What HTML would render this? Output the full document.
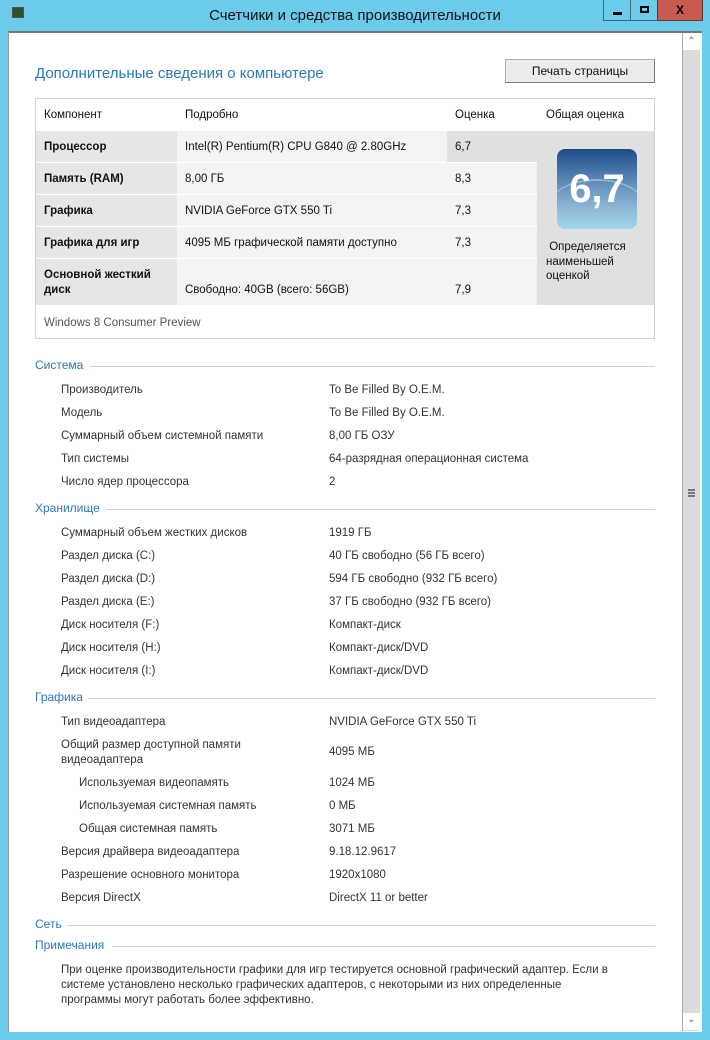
<!DOCTYPE html>
<html><head><meta charset="utf-8"><style>
*{margin:0;padding:0;box-sizing:border-box}
body{width:710px;height:1040px;background:#6ccbea;position:relative;overflow:hidden;font-family:"Liberation Sans","DejaVu Sans",sans-serif;font-size:11.5px;color:#333}
.a{position:absolute;white-space:nowrap;line-height:14px}
.h{position:absolute;left:35px;color:#2a78bf;font-size:12px;line-height:14px;white-space:nowrap}
.ln{position:absolute;height:1px;background:#d0d0d0;right:55px}
.b{font-weight:bold;color:#111}
.k{color:#111}
</style></head><body>
<!-- title bar -->
<div class="a" style="left:12px;top:7px;width:12px;height:11px;background:#2f4f2f;border:1px solid #555"></div>
<div class="a" style="left:0;width:710px;top:7px;text-align:center;font-size:15px;line-height:18px;color:#111">Счетчики и средства производительности</div>
<div class="a" style="left:603px;top:0;width:28px;height:21px;border:1px solid #3a6f80;border-top:none"><div style="position:absolute;left:9px;top:12px;width:9px;height:3px;background:#000"></div></div>
<div class="a" style="left:630px;top:0;width:28px;height:21px;border:1px solid #3a6f80;border-top:none"><div style="position:absolute;left:9px;top:6px;width:9px;height:7px;border:2px solid #000"></div></div>
<div class="a" style="left:657px;top:0;width:46px;height:21px;background:#c75b50;border:1px solid #5a3a3a;border-top:none;text-align:center;font-weight:bold;font-size:12px;line-height:20px;color:#000">X</div>
<!-- client -->
<div class="a" style="left:8px;top:31px;width:694px;height:1001px;background:#fff;border-top:2px solid #777;border-left:1px solid #999"></div>
<!-- scrollbar -->
<div class="a" style="left:682px;top:33px;width:18px;height:998px;background:#dcdcdc;border-left:1px solid #aaa"></div>
<div class="a" style="left:683px;top:33px;width:17px;height:17px;background:#fff;text-align:center;font-size:10px;color:#666;line-height:17px">&#8963;</div>
<div class="a" style="left:683px;top:1013px;width:17px;height:17px;background:#fff;text-align:center;font-size:10px;color:#666;line-height:14px">&#8964;</div>
<div class="a" style="left:688px;top:489px;width:7px;height:2px;background:#777;box-shadow:0 3px 0 #777,0 6px 0 #777"></div>

<div class="a" style="left:35px;top:65px;font-size:15px;line-height:18px;color:#2a78bf">Дополнительные сведения о компьютере</div>
<div class="a" style="left:505px;top:59px;width:150px;height:24px;background:#ececec;border:1px solid #adadad;border-right-color:#777;border-bottom-color:#777;text-align:center;line-height:22px;color:#111;font-size:12px">Печать страницы</div>

<!-- table -->
<div class="a" style="left:35px;top:98px;width:620px;height:241px;border:1px solid #d0d0d0;background:#fff"></div>
<div class="a k" style="left:44px;top:108px">Компонент</div>
<div class="a k" style="left:185px;top:108px">Подробно</div>
<div class="a k" style="left:455px;top:108px">Оценка</div>
<div class="a k" style="left:546px;top:108px">Общая оценка</div>
<div class="a" style="left:537px;top:131px;width:117px;height:174px;background:#e0e0e0"></div>
<!-- rows -->
<div class="a" style="left:36px;top:131px;width:141px;height:31px;background:#e6e6e6"></div>
<div class="a" style="left:177px;top:131px;width:270px;height:31px;background:#f3f3f3"></div>
<div class="a" style="left:447px;top:131px;width:90px;height:31px;background:#e0e0e0"></div>
<div class="a" style="left:36px;top:163px;width:141px;height:31px;background:#e6e6e6"></div>
<div class="a" style="left:177px;top:163px;width:360px;height:31px;background:#f3f3f3"></div>
<div class="a" style="left:36px;top:195px;width:141px;height:31px;background:#e6e6e6"></div>
<div class="a" style="left:177px;top:195px;width:360px;height:31px;background:#f3f3f3"></div>
<div class="a" style="left:36px;top:227px;width:141px;height:31px;background:#e6e6e6"></div>
<div class="a" style="left:177px;top:227px;width:360px;height:31px;background:#f3f3f3"></div>
<div class="a" style="left:36px;top:259px;width:141px;height:46px;background:#e6e6e6"></div>
<div class="a" style="left:177px;top:259px;width:360px;height:46px;background:#f3f3f3"></div>
<div class="a b" style="left:44px;top:140px">Процессор</div>
<div class="a k" style="left:185px;top:140px">Intel(R) Pentium(R) CPU G840 @ 2.80GHz</div>
<div class="a k" style="left:455px;top:140px">6,7</div>
<div class="a b" style="left:44px;top:172px">Память (RAM)</div>
<div class="a k" style="left:185px;top:172px">8,00 ГБ</div>
<div class="a k" style="left:455px;top:172px">8,3</div>
<div class="a b" style="left:44px;top:204px">Графика</div>
<div class="a k" style="left:185px;top:204px">NVIDIA GeForce GTX 550 Ti</div>
<div class="a k" style="left:455px;top:204px">7,3</div>
<div class="a b" style="left:44px;top:236px">Графика для игр</div>
<div class="a k" style="left:185px;top:236px">4095 МБ графической памяти доступно</div>
<div class="a k" style="left:455px;top:236px">7,3</div>
<div class="a b" style="left:44px;top:268px;line-height:15px">Основной жесткий<br>диск</div>
<div class="a k" style="left:185px;top:283px">Свободно: 40GB (всего: 56GB)</div>
<div class="a k" style="left:455px;top:283px">7,9</div>
<!-- badge -->
<div class="a" style="left:557px;top:149px;width:80px;height:80px;border-radius:8px;background:linear-gradient(180deg,#1d4c86 0%,#5d89b8 40%,#8fb9d8 75%,#9fd6ea 100%);overflow:hidden">
<div style="position:absolute;left:-10px;top:30px;width:100px;height:60px;border-radius:50%;border-top:2px solid rgba(255,255,255,.35)"></div>
<div style="position:absolute;left:0;top:0;width:80px;text-align:center;font-weight:bold;font-size:40px;line-height:80px;color:#fff">6,7</div></div>
<div class="a k" style="left:546px;top:240px;line-height:14.5px">&nbsp;Определяется<br>наименьшей<br>оценкой</div>
<div class="a" style="left:44px;top:316px;color:#555">Windows 8 Consumer Preview</div>

<!-- sections -->
<div class="h" style="top:358px">Система</div><div class="ln" style="left:90px;top:366px"></div>
<div class="a" style="left:61px;top:383px">Производитель</div><div class="a" style="left:329px;top:383px">To Be Filled By O.E.M.</div>
<div class="a" style="left:61px;top:406px">Модель</div><div class="a" style="left:329px;top:406px">To Be Filled By O.E.M.</div>
<div class="a" style="left:61px;top:429px">Суммарный объем системной памяти</div><div class="a" style="left:329px;top:429px">8,00 ГБ ОЗУ</div>
<div class="a" style="left:61px;top:452px">Тип системы</div><div class="a" style="left:329px;top:452px">64-разрядная операционная система</div>
<div class="a" style="left:61px;top:475px">Число ядер процессора</div><div class="a" style="left:329px;top:475px">2</div>

<div class="h" style="top:501px">Хранилище</div><div class="ln" style="left:106px;top:509px"></div>
<div class="a" style="left:61px;top:526px">Суммарный объем жестких дисков</div><div class="a" style="left:329px;top:526px">1919 ГБ</div>
<div class="a" style="left:61px;top:549px">Раздел диска (C:)</div><div class="a" style="left:329px;top:549px">40 ГБ свободно (56 ГБ всего)</div>
<div class="a" style="left:61px;top:572px">Раздел диска (D:)</div><div class="a" style="left:329px;top:572px">594 ГБ свободно (932 ГБ всего)</div>
<div class="a" style="left:61px;top:595px">Раздел диска (E:)</div><div class="a" style="left:329px;top:595px">37 ГБ свободно (932 ГБ всего)</div>
<div class="a" style="left:61px;top:618px">Диск носителя (F:)</div><div class="a" style="left:329px;top:618px">Компакт-диск</div>
<div class="a" style="left:61px;top:641px">Диск носителя (H:)</div><div class="a" style="left:329px;top:641px">Компакт-диск/DVD</div>
<div class="a" style="left:61px;top:664px">Диск носителя (I:)</div><div class="a" style="left:329px;top:664px">Компакт-диск/DVD</div>

<div class="h" style="top:690px">Графика</div><div class="ln" style="left:88px;top:698px"></div>
<div class="a" style="left:61px;top:715px">Тип видеоадаптера</div><div class="a" style="left:329px;top:715px">NVIDIA GeForce GTX 550 Ti</div>
<div class="a" style="left:61px;top:738px;line-height:15px">Общий размер доступной памяти<br>видеоадаптера</div><div class="a" style="left:329px;top:745px">4095 МБ</div>
<div class="a" style="left:79px;top:776px">Используемая видеопамять</div><div class="a" style="left:329px;top:776px">1024 МБ</div>
<div class="a" style="left:79px;top:799px">Используемая системная память</div><div class="a" style="left:329px;top:799px">0 МБ</div>
<div class="a" style="left:79px;top:822px">Общая системная память</div><div class="a" style="left:329px;top:822px">3071 МБ</div>
<div class="a" style="left:61px;top:845px">Версия драйвера видеоадаптера</div><div class="a" style="left:329px;top:845px">9.18.12.9617</div>
<div class="a" style="left:61px;top:868px">Разрешение основного монитора</div><div class="a" style="left:329px;top:868px">1920x1080</div>
<div class="a" style="left:61px;top:891px">Версия DirectX</div><div class="a" style="left:329px;top:891px">DirectX 11 or better</div>

<div class="h" style="top:917px">Сеть</div><div class="ln" style="left:67px;top:925px"></div>
<div class="h" style="top:938px">Примечания</div><div class="ln" style="left:112px;top:946px"></div>
<div class="a" style="left:61px;top:963px;line-height:15px">При оценке производительности графики для игр тестируется основной графический адаптер. Если в<br>системе установлено несколько графических адаптеров, с некоторыми из них определенные<br>программы могут работать более эффективно.</div>
</body></html>
